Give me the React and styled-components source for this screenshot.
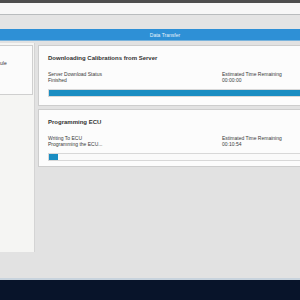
import React from 'react'
import styled, { createGlobalStyle } from 'styled-components'

const Global = createGlobalStyle`
    html, body {
        margin: 0;
        padding: 0;
        background: #dedede;
    }
    body {
        font-family: "Liberation Sans", Arial, sans-serif;
    }
`

const Screen = styled.div`
    width: 300px;
    height: 300px;
    overflow: hidden;
    display: flex;
    flex-direction: column;
    background: #dedede;
`

const TopEdge = styled.div`
    height: 3px;
    background: #4d4d4d;
`

const AddressBar = styled.div`
    height: 11px;
    background: #f7f7f7;
    border-bottom: 1px solid #b9bcbe;
`

const Gutter = styled.div`
    height: 14px;
    background: #e4e4e4;
`

const TitleBar = styled.div`
    height: 12px;
    background: #2e90d6;
    color: #e6f2fb;
    font-size: 5px;
    display: flex;
    align-items: center;
    justify-content: center;
    padding-left: 30px;
    box-sizing: border-box;
    border-bottom: 1px solid #7ab3dc;
`

const Body = styled.div`
    flex: 1;
    display: flex;
    gap: 3px;
    padding-top: 2px;
    background: #e2e2e2;
    overflow: hidden;
`

const Side = styled.div`
    width: 35px;
    height: 209px;
    flex-shrink: 0;
    background: #f5f5f3;
    border-right: 1px solid #d4d4d4;
    box-sizing: border-box;
    padding-top: 2px;
`

const SideBox = styled.div`
    height: 50px;
    width: 33px;
    box-sizing: border-box;
    border: 1px solid #cfcfcf;
    border-left: none;
    background: #fbfbfb;
    padding-top: 14px;
`

const SideLabel = styled.div`
    font-size: 5px;
    color: #333;
    white-space: nowrap;
`

const Column = styled.div`
    display: flex;
    flex-direction: column;
    gap: 3px;
    padding-top: 2px;
`

const Card = styled.div`
    width: 270px;
    height: ${p => p.$h}px;
    box-sizing: border-box;
    background: #fcfcfc;
    border: 1px solid #cdcdcd;
    padding: 8px 0 0 9px;
    display: flex;
    flex-direction: column;
`

const CardTitle = styled.div`
    font-size: 6px;
    font-weight: bold;
    color: #333;
    height: 8px;
    line-height: 8px;
    margin-bottom: 9px;
`

const Info = styled.div`
    display: grid;
    grid-template-columns: 174px 1fr;
    font-size: 5px;
    line-height: 6px;
    color: #3a3a3a;
    margin-bottom: 6px;
`

const Track = styled.div`
    height: 8px;
    width: 262px;
    box-sizing: border-box;
    background: #fafafa;
    border: 1px solid #d8d8d8;
    display: flex;
`

const Fill = styled.div`
    height: 100%;
    background: #1a8dc2;
`

function Progress({ value }) {
    return (
        <Track>
            <Fill style={{ width: value + '%' }} />
        </Track>
    )
}

const Bottom = styled.div`
    height: 22px;
    background: #08142a;
    border-top: 2px solid #c8d3dd;
    box-sizing: border-box;
`

export default function App() {
    return (
        <Screen>
            <Global />
            <TopEdge />
            <AddressBar />
            <Gutter />
            <TitleBar>Data Transfer</TitleBar>
            <Body>
                <Side>
                    <SideBox>
                        <SideLabel>ule</SideLabel>
                    </SideBox>
                </Side>
                <Column>
                    <Card $h={61}>
                        <CardTitle>Downloading Calibrations from Server</CardTitle>
                        <Info>
                            <div>Server Download Status<br />Finished</div>
                            <div>Estimated Time Remaining<br />00:00:00</div>
                        </Info>
                        <Progress value={100} />
                    </Card>
                    <Card $h={58}>
                        <CardTitle>Programming ECU</CardTitle>
                        <Info>
                            <div>Writing To ECU<br />Programming the ECU...</div>
                            <div>Estimated Time Remaining<br />00:10:54</div>
                        </Info>
                        <Progress value={3.5} />
                    </Card>
                </Column>
            </Body>
            <Bottom />
        </Screen>
    )
}
